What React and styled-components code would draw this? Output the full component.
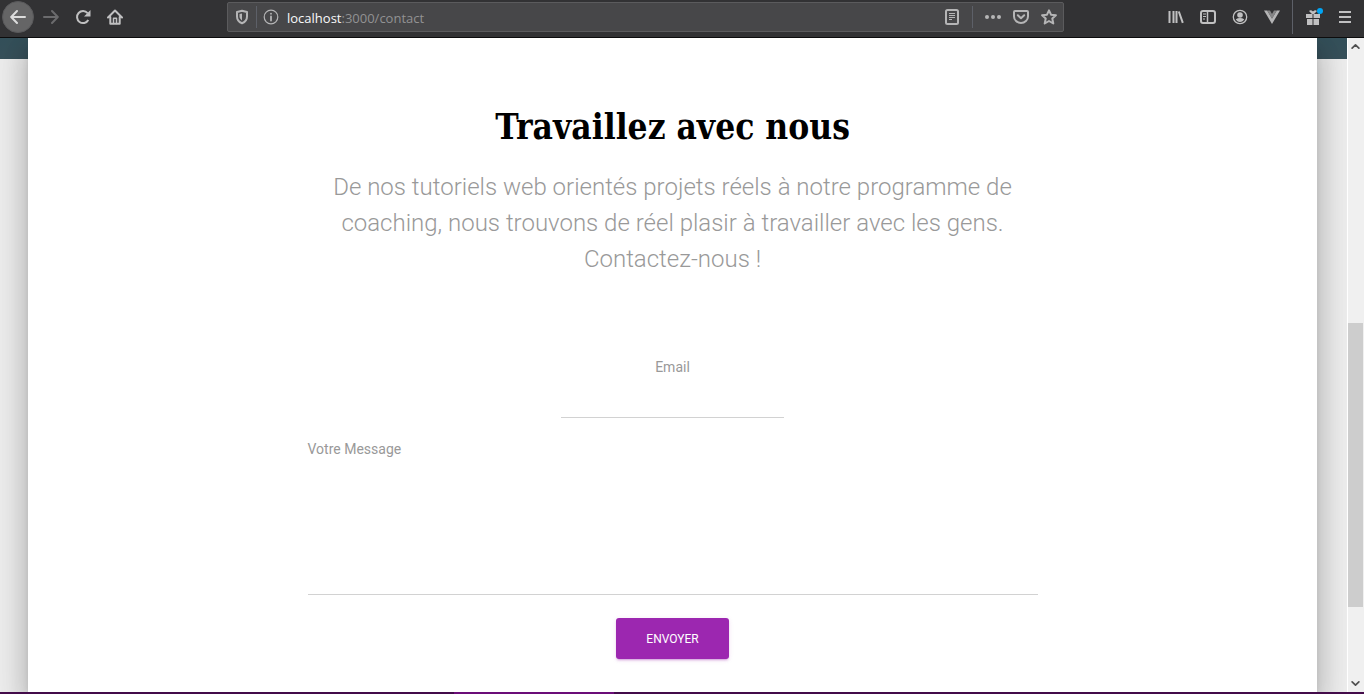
import React from "react";
import styled, { createGlobalStyle } from "styled-components";

const GlobalStyle = createGlobalStyle`
  *, *::before, *::after { box-sizing: border-box; }
  body {
    margin: 0;
    background: #e9e9e9;
    font-family: Roboto, "Liberation Sans", sans-serif;
    overflow: hidden;
  }
`;

const Window = styled.div`
  display: flex;
  flex-direction: column;
  height: 100vh;
`;

const Toolbar = styled.header`
  display: flex;
  flex: none;
  align-items: flex-start;
  height: 38px;
  padding: 0 3px 0 2px;
  background: #323234;
  border-bottom: 1px solid #0c0c0d;
`;

const ToolGroup = styled.div`
  display: flex;
  align-items: center;
  height: 34px;
`;

const IconButton = styled.button`
  display: grid;
  place-items: center;
  width: 32px;
  height: 32px;
  padding: 0;
  border: 0;
  background: none;
  color: ${(p) => (p.$dim ? "#6b6b6d" : "#c0c0c1")};
`;

const BackButton = styled(IconButton)`
  margin-right: 1px;
  border: 1px solid #59595b;
  border-radius: 50%;
  background: #656566;
  color: #dcdcdc;
`;

const AddressBar = styled.div`
  display: flex;
  flex: 1;
  align-items: center;
  height: 30px;
  margin: 2px 96px 0;
  border: 1px solid #5b5b5d;
  border-radius: 2px;
  background: #474749;
`;

const BarButton = styled(IconButton)`
  flex: none;
  width: 28px;
  height: 28px;
  color: #b5b5b6;
`;

const Divider = styled.span`
  flex: none;
  width: 1px;
  height: ${(p) => p.$height}px;
  margin: 0 ${(p) => p.$gap}px;
  background: #5d6068;
`;

const Address = styled.div`
  flex: 1;
  padding: 2px 0 0 2px;
  color: #929293;
  font: 13px/20px "Open Sans", "Noto Sans", sans-serif;

  b {
    color: #f9f9fa;
    font-weight: 400;
  }
`;

const Viewport = styled.div`
  display: flex;
  flex: 1;
  min-height: 0;
`;

const Page = styled.main`
  flex: 1;
  display: flex;
  padding: 0 30px 0 28px;
  background: linear-gradient(#34505a, #37505a) 0 0 / 100% 21px no-repeat #ececec;
  overflow: hidden;
`;

const Card = styled.section`
  flex: 1;
  padding: 64px 24px 32px;
  background: #fff;
  box-shadow: 0 16px 24px 2px rgba(0, 0, 0, 0.14),
    0 6px 30px 5px rgba(0, 0, 0, 0.12), 0 8px 10px -5px rgba(0, 0, 0, 0.2);
`;

const Column = styled.div`
  width: 100%;
  max-width: 730px;
  margin: 0 auto;
  text-align: center;
`;

const Title = styled.h2`
  margin: 0;
  color: #000;
  font: 700 35px/50px "Roboto Slab", "DejaVu Serif Condensed", "DejaVu Serif", serif;
`;

const Intro = styled.p`
  margin: 17px 0 0;
  padding: 0 16px;
  color: #999;
  font-size: 24px;
  font-weight: 300;
  line-height: 36px;
`;

const Form = styled.form`
  display: flex;
  flex-direction: column;
  align-items: center;
  padding-top: 80px;
`;

const Label = styled.label`
  align-self: ${(p) => p.$align};
  color: #999;
  font-size: 14px;
  line-height: 20px;
`;

const EmailInput = styled.input`
  width: 223px;
  height: 36px;
  margin: 5px 0 21px;
  padding: 6px 0;
  border: 0;
  border-bottom: 1px solid #d2d2d2;
  outline: 0;
  background: none;
  font: 14px/20px Roboto, sans-serif;
`;

const MessageInput = styled.textarea`
  width: 100%;
  height: 136px;
  margin: 0 0 23px;
  padding: 6px 0;
  border: 0;
  border-bottom: 1px solid #d2d2d2;
  outline: 0;
  background: none;
  resize: none;
  font: 14px/20px Roboto, sans-serif;
`;

const SubmitButton = styled.button`
  height: 41px;
  padding: 2px 30px 0;
  border: 0;
  border-radius: 3px;
  background: #9c27b0;
  color: #fff;
  box-shadow: 0 2px 2px 0 rgba(156, 39, 176, 0.14),
    0 3px 1px -2px rgba(156, 39, 176, 0.2), 0 1px 5px 0 rgba(156, 39, 176, 0.12);
  font: 400 12px/17px Roboto, sans-serif;
  text-transform: uppercase;
`;

const ScrollTrack = styled.div`
  display: flex;
  flex-direction: column;
  flex: none;
  width: 17px;
  border-left: 1px solid #fff;
  background: #f0f0f0;
`;

const ScrollArrow = styled.button`
  display: grid;
  place-items: center;
  width: 15px;
  height: 17px;
  padding: 0;
  border: 0;
  background: none;
  color: #505050;
`;

const ScrollLane = styled.div`
  display: grid;
  grid-template-rows: 268fr 284fr 68fr;
  flex: 1;
`;

const ScrollThumb = styled.div`
  grid-row: 2;
  width: 15px;
  background: #cdcdcd;
`;

const BottomEdge = styled.footer`
  display: grid;
  grid-template-columns: 454fr 160fr 750fr;
  flex: none;
  height: 2px;
  background: #430b4a;

  &::before {
    content: "";
    grid-column: 2;
    background: #6b0d78;
  }
`;

const Icon = ({ children, size = 16, width = 2 }) => (
  <svg
    width={size}
    height={size}
    viewBox="0 0 16 16"
    fill="none"
    stroke="currentColor"
    strokeWidth={width}
    strokeLinecap="round"
    strokeLinejoin="round"
    aria-hidden="true"
  >
    {children}
  </svg>
);

export default function App() {
  return (
    <>
      <GlobalStyle />
      <Window>
        <Toolbar>
          <ToolGroup>
            <BackButton aria-label="Page précédente">
              <Icon><path d="M15 8H1.5M7 2 1.2 8 7 14" /></Icon>
            </BackButton>
            <IconButton $dim aria-label="Page suivante">
              <Icon><path d="M1 8h13.5M9 2l5.8 6L9 14" /></Icon>
            </IconButton>
            <IconButton aria-label="Actualiser">
              <Icon>
                <path d="M13.3 11A6 6 0 1 1 12.6 4.2" strokeLinecap="butt" />
                <path d="M15.5 1v6.5H9z" fill="currentColor" stroke="none" />
              </Icon>
            </IconButton>
            <IconButton aria-label="Accueil">
              <Icon>
                <path d="M1 8.5 8 1.5l7 7M3.3 8v6.8h9.4V8" />
                <path d="M6.5 14.5V9.2h3v5.3" strokeWidth="1.5" />
              </Icon>
            </IconButton>
          </ToolGroup>

          <AddressBar>
            <BarButton aria-label="Protection">
              <Icon>
                <path d="M8 1.8 13 3v4.5c0 3.4-2 5.6-5 6.8-3-1.2-5-3.4-5-6.8V3z" />
                <path d="M8 4.5v7C6.3 10.3 5.5 9 5.5 7.3V5z" fill="currentColor" stroke="none" />
              </Icon>
            </BarButton>
            <Divider $height={22} $gap={0} />
            <BarButton aria-label="Informations du site">
              <Icon width={1.2}>
                <circle cx="8" cy="8" r="6.8" />
                <path d="M8 7.5v4M8 4.6v.2" strokeWidth="1.8" />
              </Icon>
            </BarButton>
            <Address><b>localhost</b>:3000/contact</Address>
            <BarButton aria-label="Mode lecture">
              <Icon>
                <rect x="2" y="1" width="12" height="14" rx="1.5" />
                <path d="M5 4.5h6M5 6.5h6M5 8.5h6M5 10.5h3" strokeWidth="1" strokeLinecap="butt" />
              </Icon>
            </BarButton>
            <Divider $height={22} $gap={6} />
            <BarButton aria-label="Actions">
              <Icon>
                <g fill="currentColor" stroke="none">
                  <circle cx="2" cy="8" r="2" />
                  <circle cx="8" cy="8" r="2" />
                  <circle cx="14" cy="8" r="2" />
                </g>
              </Icon>
            </BarButton>
            <BarButton aria-label="Pocket">
              <Icon>
                <path d="M2 2h12a1 1 0 0 1 1 1v4.5a7 6.5 0 0 1-14 0V3a1 1 0 0 1 1-1z" />
                <path d="m4.8 6.3 3.2 3 3.2-3" />
              </Icon>
            </BarButton>
            <BarButton aria-label="Marque-page">
              <Icon><path d="m8 1.3 2 4.4 4.9.6-3.6 3.3 1 4.9L8 12l-4.3 2.5 1-4.9L1.1 6.3 6 5.7z" /></Icon>
            </BarButton>
          </AddressBar>

          <ToolGroup>
            <IconButton aria-label="Bibliothèque">
              <Icon><path d="M1.5 2v12M5.5 2v12M8.5 2v12M10.8 2.5l4 11.3" strokeLinecap="butt" /></Icon>
            </IconButton>
            <IconButton aria-label="Panneau latéral">
              <Icon>
                <rect x="1" y="2" width="14" height="12" rx="2" />
                <path d="M7.5 2v12" strokeWidth="1.5" />
                <path d="M3 5h3M3 7.5h3M3 10h2" strokeWidth="1" strokeLinecap="butt" />
              </Icon>
            </IconButton>
            <IconButton aria-label="Compte">
              <Icon width={1.3}>
                <circle cx="8" cy="8" r="6.7" />
                <circle cx="8" cy="6" r="2.8" fill="currentColor" stroke="none" />
                <path d="M3.8 10.2c2.5-1.5 5.900-1.5 8.400 0-.8 1.6-2.2 2.8-4.2 2.8s-3.4-1.2-4.2-2.8z" fill="currentColor" stroke="none" />
              </Icon>
            </IconButton>
            <IconButton aria-label="Vue">
              <Icon>
                <path d="M0 1.500h3.200L8 9.500l4.800-8H16L8 15z" fill="#b4b4b5" stroke="none" />
                <path d="M3.200 1.500H6L8 5l2-3.500h2.800L8 9.800z" fill="#858586" stroke="none" />
              </Icon>
            </IconButton>
            <Divider $height={34} $gap={4} />
            <IconButton aria-label="Nouveautés">
              <svg width="20" height="24" viewBox="0 0 20 24" fill="currentColor" aria-hidden="true">
                <path d="M3 9h6.500v4H3zM10.500 9H17v4h-6.500zM4 14h5.500v6H4zM10.500 14H16v6h-5.500zM6 6c1.500-1.500 3-.5 4 .5 1-1 2.500-2 4-.5L11 9H9z" />
                <circle cx="17" cy="6" r="3" fill="#00a5f5" />
              </svg>
            </IconButton>
            <IconButton aria-label="Menu">
              <Icon><path d="M2 3h12M2 8h12M2 13h12" strokeLinecap="butt" /></Icon>
            </IconButton>
          </ToolGroup>
        </Toolbar>

        <Viewport>
          <Page>
            <Card>
              <Column>
                <Title>Travaillez avec nous</Title>
                <Intro>
                  De nos tutoriels web orientés projets réels à notre programme de
                  coaching, nous trouvons de réel plasir à travailler avec les gens.
                  Contactez-nous !
                </Intro>
                <Form onSubmit={(e) => e.preventDefault()}>
                  <Label htmlFor="email" $align="center">Email</Label>
                  <EmailInput id="email" type="email" />
                  <Label htmlFor="message" $align="flex-start">Votre Message</Label>
                  <MessageInput id="message" />
                  <SubmitButton type="submit">Envoyer</SubmitButton>
                </Form>
              </Column>
            </Card>
          </Page>
          <ScrollTrack>
            <ScrollArrow aria-label="Défiler vers le haut">
              <Icon size={9} width={3}><path d="m2 11 6-6 6 6" /></Icon>
            </ScrollArrow>
            <ScrollLane><ScrollThumb /></ScrollLane>
            <ScrollArrow aria-label="Défiler vers le bas">
              <Icon size={9} width={3}><path d="m2 5 6 6 6-6" /></Icon>
            </ScrollArrow>
          </ScrollTrack>
        </Viewport>
        <BottomEdge />
      </Window>
    </>
  );
}
